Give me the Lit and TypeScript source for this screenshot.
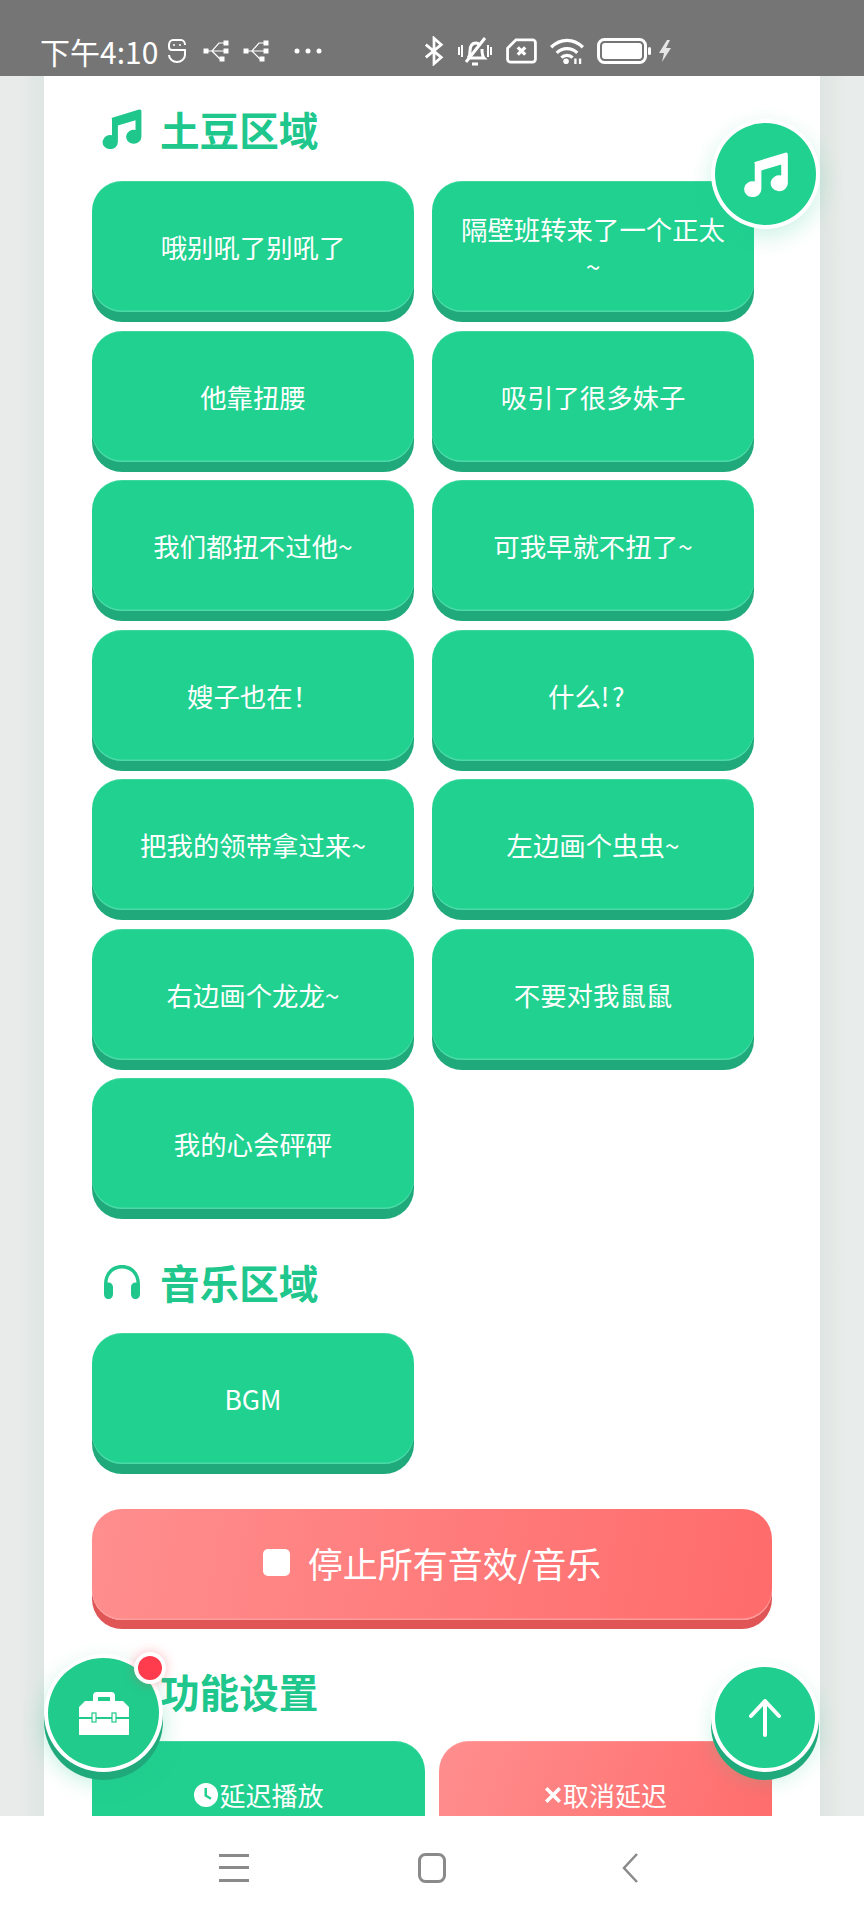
import { LitElement, css, html, svg } from "lit";
import { customElement } from "lit/decorators.js";

const NOTE = svg`<path d="M30 31 L124 2 Q132 0 132 8 V94 A26 24 0 1 1 112 71 V38 L52 56 V112 A26 24 0 1 1 32 89 V36 Q32 32 30 31 Z" />`;

const USB = svg`
  <rect x="1" y="10" width="4" height="4" /><rect x="21" y="2" width="4" height="4" /><rect x="21" y="10" width="4" height="4" /><rect x="17" y="18" width="4" height="4" />
  <path fill="none" stroke-width="1.200" d="M5 12h4l7-8h5M9 12h12M9 12l8 8" />`;

const sounds = [
  html`哦别吼了别吼了`,
  html`隔壁班转来了一个正太~`,
  html`他靠扭腰`,
  html`吸引了很多妹子`,
  html`我们都扭不过他~`,
  html`可我早就不扭了~`,
  html`嫂子也在！`,
  html`什么<span class="bang">!?</span>`,
  html`把我的领带拿过来~`,
  html`左边画个虫虫~`,
  html`右边画个龙龙~`,
  html`不要对我鼠鼠`,
  html`我的心会砰砰`,
];

@customElement("app-root")
export class AppRoot extends LitElement {
  static styles = css`
    :host {
      display: flex;
      flex-direction: column;
      position: relative;
      width: 864px;
      height: 1920px;
      overflow: hidden;
      background: #fff;
      font-family: "Noto Sans CJK SC", "Noto Sans", sans-serif;
    }
    .status {
      flex: none;
      height: 76px;
      box-sizing: border-box;
      background: #757575;
      padding: 25px 0 0 40px;
      display: flex;
      align-items: center;
      color: #fff;
    }
    .time {
      font-size: 30px;
      line-height: 32px;
      width: 128px;
      white-space: nowrap;
    }
    .status svg {
      flex: none;
      display: block;
    }
    .page {
      flex: 1;
      min-height: 0;
      overflow: hidden;
      background: linear-gradient(90deg, #e8ebea 0, #e8ebea 18px, #dfe6e3 44px);
      position: relative;
    }
    .page::after {
      content: "";
      position: absolute;
      top: 0;
      bottom: 0;
      right: 0;
      width: 44px;
      background: linear-gradient(270deg, #e8ecea 0, #e8ecea 18px, #dfe5e2 44px);
    }
    .card {
      width: 776px;
      height: 100%;
      box-sizing: border-box;
      margin-left: 44px;
      background: #fff;
      padding: 28px 48px 0;
    }
    h2 {
      margin: 0 0 27px;
      height: 50px;
      display: flex;
      align-items: center;
      gap: 18px;
      padding-left: 10px;
      font-size: 39.6px;
      line-height: 50px;
      font-weight: 700;
      color: #20c78d;
    }
    h2 svg {
      flex: none;
      width: 40px;
      height: 40px;
      fill: #20c78d;
    }
    .second {
      margin-top: 48px;
      margin-bottom: 26px;
    }
    .grid {
      display: grid;
      grid-template-columns: 322px 322px;
      gap: 18.5px 18px;
    }
    .btn {
      height: 131px;
      box-sizing: border-box;
      padding: 0 24px;
      border-radius: 30px;
      background: #21d190;
      color: #fff;
      font-size: 26.4px;
      line-height: 37px;
      text-align: center;
      display: flex;
      align-items: center;
      justify-content: center;
      box-shadow: inset 0 1px 0 rgba(255, 255, 255, 0.14), inset 0 -1.5px 0 #4ddaa8, 0 10px 0 #20aa7c;
    }
    .bang {
      letter-spacing: 2.5px;
      margin-right: 11px;
    }
    .stop {
      margin-top: 45px;
      width: 680px;
      height: 111px;
      padding-bottom: 4px;
      gap: 18px;
      font-size: 35px;
      background: linear-gradient(100deg, #ff8e8e, #ff6b6b);
      box-shadow: inset 0 -1.5px 0 #ff9c9c, 0 9px 0 #e05555;
    }
    .stop i {
      width: 27px;
      height: 27px;
      border-radius: 5px;
      background: #fff;
    }
    .settings {
      margin-top: 46px;
      margin-bottom: 25px;
    }
    .pair {
      display: grid;
      grid-template-columns: 333px 333px;
      gap: 14px;
    }
    .pair .btn {
      align-items: flex-start;
      padding-top: 35px;
      gap: 0;
      font-size: 26px;
      box-shadow: inset 0 1px 0 rgba(255, 255, 255, 0.14);
      background: #21cf8f;
    }
    .pair svg {
      flex: none;
      width: 26px;
      height: 26px;
      margin-top: 6px;
      fill: #fff;
    }
    .pair .cancel {
      background: linear-gradient(110deg, #ff8e8e, #ff6b6b);
    }
    .pair .cancel svg {
      width: 18px;
      height: 18px;
      margin-top: 10px;
      margin-right: 1px;
    }
    .fab {
      position: absolute;
      box-sizing: content-box;
      border: 4px solid #fff;
      border-radius: 50%;
      background: #21d190;
      display: flex;
      align-items: center;
      justify-content: center;
    }
    .fab svg {
      display: block;
      fill: #fff;
    }
    .fab-music {
      left: 711px;
      top: 119px;
      width: 101px;
      height: 102px;
      box-shadow: 0 8px 22px rgba(32, 199, 141, 0.22);
    }
    .fab-up {
      left: 711px;
      top: 1663px;
      width: 100px;
      height: 101px;
      background: #20cf8f;
      box-shadow: 0 8px 0 #20aa7c, 0 10px 20px rgba(32, 199, 141, 0.2);
    }
    .fab-up svg {
      fill: none;
    }
    .fab-tools {
      left: 44px;
      top: 1654px;
      width: 111px;
      height: 110px;
      background: #20cb8c;
      box-shadow: 0 8px 0 #20aa7c, 0 10px 22px rgba(32, 199, 141, 0.3);
    }
    .dot {
      position: absolute;
      right: -7px;
      top: -6px;
      width: 24px;
      height: 24px;
      border: 4px solid #fff;
      border-radius: 50%;
      background: #ff3b4e;
      box-shadow: 0 0 12px rgba(255, 59, 78, 0.35);
    }
    .nav {
      flex: none;
      height: 104px;
      background: #fff;
      display: grid;
      grid-template-columns: 219px 30px 169px 28px 175px 18px;
      align-items: center;
    }
    .nav svg {
      display: block;
      grid-row: 1;
    }
    .nav .m {
      grid-column: 2;
    }
    .nav .h {
      grid-column: 4;
    }
    .nav .b {
      grid-column: 6;
    }
  `;

  render() {
    return html`
      <div class="status">
        <span class="time">下午4:10</span>
        <svg width="18" height="24" viewBox="0 0 18 24" fill="none" stroke="#fff" stroke-width="2">
          <path d="M17 6c0-3-2-5-4-5H5C3 1 1 3 1 6v2c0 2 1 3 3 3h13v5c0 4-4 7-8 7s-8-3-8-7" />
          <circle cx="6" cy="6" r="1" fill="#fff" stroke="none" /><circle cx="12" cy="6" r="1" fill="#fff" stroke="none" />
        </svg>
        <svg style="margin-left:17px" width="27" height="24" viewBox="0 0 27 24" fill="#fff" stroke="#fff">${USB}</svg>
        <svg style="margin-left:13px" width="27" height="24" viewBox="0 0 27 24" fill="#fff" stroke="#fff">${USB}</svg>
        <svg style="margin-left:23px" width="30" height="8" viewBox="0 0 30 8" fill="#fff">
          <circle cx="4" cy="4" r="2.500" /><circle cx="15" cy="4" r="2.500" /><circle cx="26" cy="4" r="2.500" />
        </svg>
        <svg style="margin-left:101px" width="20" height="30" viewBox="0 0 22 32" fill="none" stroke="#fff" stroke-width="3">
          <path d="M2 9l17 14-8 7V2l8 7L2 23" />
        </svg>
        <svg style="margin-left:13px" width="36" height="30" viewBox="0 0 36 30" fill="none" stroke="#fff" stroke-width="3">
          <path d="M15 28h6M11 22c2-2 2-4 2-7 0-5 2-8 6-8 2 0 3 1 4 2M25 13c0 4 0 7 2 9H12" />
          <path d="M9 26L28 2" />
          <path d="M2 11v8M5 9v12M31 9v12M34 11v8" stroke-width="2" />
        </svg>
        <svg style="margin-left:12px" width="33" height="26" viewBox="0 0 34 28" fill="none" stroke="#fff" stroke-width="3">
          <path d="M11 2h18a3 3 0 0 1 3 3v18a3 3 0 0 1-3 3H5a3 3 0 0 1-3-3V11z" />
          <path d="M13 10l8 8M21 10l-8 8" stroke-width="3.500" />
        </svg>
        <svg style="margin-left:10px" width="38" height="28" viewBox="0 0 38 30" fill="none" stroke="#fff" stroke-width="3.500">
          <path d="M2 11c10-10 24-10 34 0M8 17c6-6 16-6 22 0M13 22c3-3 9-3 12 0" />
          <circle cx="18" cy="26" r="3" fill="#fff" stroke="none" />
          <path d="M28 29v-6M33 29v-6" stroke-width="2.500" />
        </svg>
        <svg style="margin-left:11px" width="54" height="26" viewBox="0 0 54 26" fill="none">
          <rect x="1.500" y="1.500" width="47" height="23" rx="6" stroke="#fff" stroke-width="3" />
          <rect x="5" y="5" width="40" height="16" rx="3" fill="#fff" />
          <rect x="51" y="9" width="3" height="8" rx="1.500" fill="#fff" />
        </svg>
        <svg style="margin-left:7px" width="14" height="24" viewBox="0 0 14 24" fill="#e4e4e4">
          <path d="M9 1L1 14h5l-2 9 9-14H8l4-8z" />
        </svg>
      </div>
      <div class="page">
        <div class="card">
          <h2><svg viewBox="0 0 132 136">${NOTE}</svg>土豆区域</h2>
          <div class="grid">
            ${sounds.map((s) => html`<div class="btn"><span>${s}</span></div>`)}
          </div>
          <h2 class="second">
            <svg viewBox="0 0 40 40"><path d="M20 3C9.500 3 2 11 2 22v10c0 3 2 5 4.500 5S11 35 11 32v-7c0-2.500-2-4.500-4.500-4.500-.5 0-.8 0-1 .1C6 12 12 6.500 20 6.500S34 12 34.500 20.600c-.2-.1-.5-.1-1-.1-2.500 0-4.500 2-4.500 4.500v7c0 3 2 5 4.500 5S38 35 38 32V22C38 11 30.500 3 20 3z"/></svg>音乐区域
          </h2>
          <div class="grid">
            <div class="btn">BGM</div>
          </div>
          <div class="btn stop"><i></i>停止所有音效/音乐</div>
          <h2 class="settings"><svg viewBox="0 0 40 40"></svg>功能设置</h2>
          <div class="pair">
            <div class="btn">
              <svg viewBox="0 0 26 26"><path fill-rule="evenodd" d="M13 1a12 12 0 1 1 0 24 12 12 0 0 1 0-24zM11.500 6v8.200l5.800 3.500 1.300-2-4.600-2.800V6z"/></svg>延迟播放
            </div>
            <div class="btn cancel">
              <svg viewBox="0 0 18 18"><path d="M1 3.500L3.500 1 9 6.500 14.500 1 17 3.500 11.500 9l5.500 5.500-2.500 2.500L9 11.500 3.500 17 1 14.500 6.500 9z"/></svg>取消延迟
            </div>
          </div>
        </div>
      </div>
      <div class="nav">
        <svg class="m" width="30" height="28" viewBox="0 0 30 28" fill="#8a8a8a"><rect y="0" width="30" height="3" /><rect y="12" width="30" height="3" /><rect y="25" width="30" height="3" /></svg>
        <svg class="h" width="28" height="30" viewBox="0 0 28 30" fill="none" stroke="#8a8a8a" stroke-width="3"><rect x="1.500" y="1.500" width="25" height="27" rx="6" /></svg>
        <svg class="b" width="18" height="30" viewBox="0 0 18 30" fill="none" stroke="#8a8a8a" stroke-width="2.500"><path d="M16 1L3 15l13 14" /></svg>
      </div>
      <div class="fab fab-music">
        <svg width="44" height="45" viewBox="0 0 132 136">${NOTE}</svg>
      </div>
      <div class="fab fab-tools">
        <svg width="50" height="43" viewBox="0 0 50 43">
          <path fill-rule="evenodd" d="M14 9V4a4 4 0 0 1 4-4h14a4 4 0 0 1 4 4v5h8l6 6v28H0V15l6-6zm5-4v4h12V5z"/>
          <path d="M0 25h50v2H0z" fill="#20cb8c"/>
          <rect x="13" y="21" width="4" height="9" stroke="#20cb8c" stroke-width="1.200"/>
          <rect x="33" y="21" width="4" height="9" stroke="#20cb8c" stroke-width="1.200"/>
        </svg>
        <span class="dot"></span>
      </div>
      <div class="fab fab-up">
        <svg width="34" height="39" viewBox="0 0 34 39" stroke="#fff" stroke-width="4" stroke-linecap="round" stroke-linejoin="round"><path d="M17 37V3M3 18L17 3l14 15" /></svg>
      </div>
    `;
  }
}

declare global {
  interface HTMLElementTagNameMap {
    "app-root": AppRoot;
  }
}
